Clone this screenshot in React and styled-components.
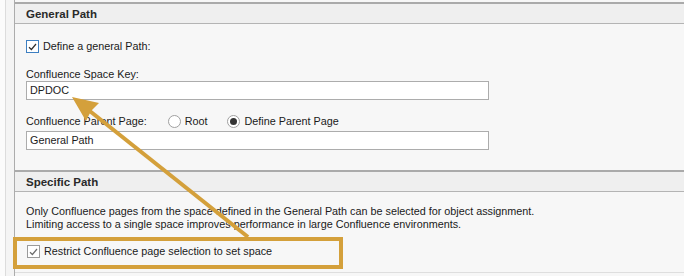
import styled, { createGlobalStyle } from 'styled-components';

const GlobalStyle = createGlobalStyle`
  html, body {
    margin: 0;
    padding: 0;
    background: #f7f7f7;
  }
  body {
    font-family: "Liberation Sans", Arial, sans-serif;
    font-size: 10.8px;
    color: #1a1a1a;
  }
`;

const Page = styled.div`
  position: relative;
  width: 684px;
  height: 276px;
  display: flex;
  overflow: hidden;
  background: #fbfbfb;
`;

const Gutter = styled.div`
  width: 8px;
  margin-left: 5px;
  border-left: 1px solid #dcdcdc;
  border-right: 1px solid #acacac;
  background: #f4f4f4;
`;

const Panel = styled.div`
  flex: 1;
  display: flex;
  flex-direction: column;
  padding-top: 2px;
  background: #f7f7f7;
`;

const SectionHeader = styled.div`
  height: 19px;
  display: flex;
  align-items: center;
  padding-left: 11px;
  background: #efefef;
  border-top: 2px solid #aaaaaa;
  border-bottom: 1px solid #b4b4b4;
  font-weight: bold;
  font-size: 11.5px;
  color: #2a2a2a;
`;

const SectionBody = styled.div`
  display: flex;
  flex-direction: column;
  padding: ${({ $pad }) => $pad};
  border-bottom: ${({ $last }) => ($last ? '1px solid #dedede' : 'none')};
`;

const Row = styled.label`
  position: relative;
  display: flex;
  align-items: center;
  height: 13px;
  line-height: 13px;
  margin-top: ${({ $top }) => $top || 0}px;
  margin-left: ${({ $indent }) => $indent || 0}px;
  white-space: nowrap;
`;

const Box = styled.span`
  width: 11px;
  height: 11px;
  margin-right: 4px;
  border: 1px solid ${({ $focus }) => ($focus ? '#3d7fc1' : '#9a9a9a')};
  background: #fff;
  display: flex;
  align-items: center;
  justify-content: center;
  flex-shrink: 0;
`;

const Radio = styled.span`
  width: 11px;
  height: 11px;
  border-radius: 50%;
  border: 1px solid #a0a0a0;
  background: #fff;
  margin: 0 4px 0 ${({ $gap }) => $gap}px;
  display: flex;
  align-items: center;
  justify-content: center;
  flex-shrink: 0;

  &::after {
    content: '';
    display: ${({ $on }) => ($on ? 'block' : 'none')};
    width: 7px;
    height: 7px;
    border-radius: 50%;
    background: #333;
  }
`;

const FieldLabel = styled.div`
  height: 13px;
  line-height: 13px;
  margin-top: ${({ $top }) => $top}px;
  display: flex;
  align-items: center;
  white-space: nowrap;
`;

const Field = styled.div`
  width: 458px;
  height: 17px;
  line-height: 17px;
  margin-top: ${({ $top }) => $top}px;
  padding-left: 3px;
  border: 1px solid #acacac;
  background: #fff;
`;

const Note = styled.p`
  margin: 0;
  line-height: 13px;
`;

const Highlight = styled.div`
  position: absolute;
  left: -14px;
  top: -8px;
  width: 322px;
  height: 24px;
  border: 4px solid #d4a03b;
  pointer-events: none;
`;

const Overlay = styled.svg`
  position: absolute;
  left: 0;
  top: 0;
  pointer-events: none;
`;

function Check({ focus, muted }) {
  return (
    <Box $focus={focus}>
      <svg width="9" height="8" viewBox="0 0 9 8">
        <path d="M1 4.2 L3.4 6.5 L8 1" fill="none" stroke={muted ? '#6d6d6d' : '#2f2f2f'} strokeWidth="1.2" />
      </svg>
    </Box>
  );
}

export default function App() {
  return (
    <>
      <GlobalStyle />
      <Page>
        <Gutter />
        <Panel>
          <SectionHeader>General Path</SectionHeader>
          <SectionBody $pad="16px 11px 20px">
            <Row>
              <Check focus />
              Define a general Path:
            </Row>
            <FieldLabel $top={15}>Confluence Space Key:</FieldLabel>
            <Field $top={0}>DPDOC</Field>
            <FieldLabel $top={15}>
              Confluence Parent Page:
              <Radio $gap={21} />
              Root
              <Radio $gap={20} $on />
              Define Parent Page
            </FieldLabel>
            <Field $top={3}>General Path</Field>
          </SectionBody>
          <SectionHeader>Specific Path</SectionHeader>
          <SectionBody $pad="13px 11px 14px" $last>
            <Note>
              Only Confluence pages from the space defined in the General Path can be selected for object assignment.
              <br />
              Limiting access to a single space improves performance in large Confluence environments.
            </Note>
            <Row $top={14} $indent={1}>
              <Check muted />
              Restrict Confluence page selection to set space
              <Highlight />
            </Row>
          </SectionBody>
        </Panel>
        <Overlay width="684" height="276" viewBox="0 0 684 276">
          <line x1="248" y1="237" x2="86" y2="108" stroke="#d4a03b" strokeWidth="4" />
          <path d="M72 97 L99 103 L91 111 L86 121 Z" fill="#d4a03b" />
        </Overlay>
      </Page>
    </>
  );
}
